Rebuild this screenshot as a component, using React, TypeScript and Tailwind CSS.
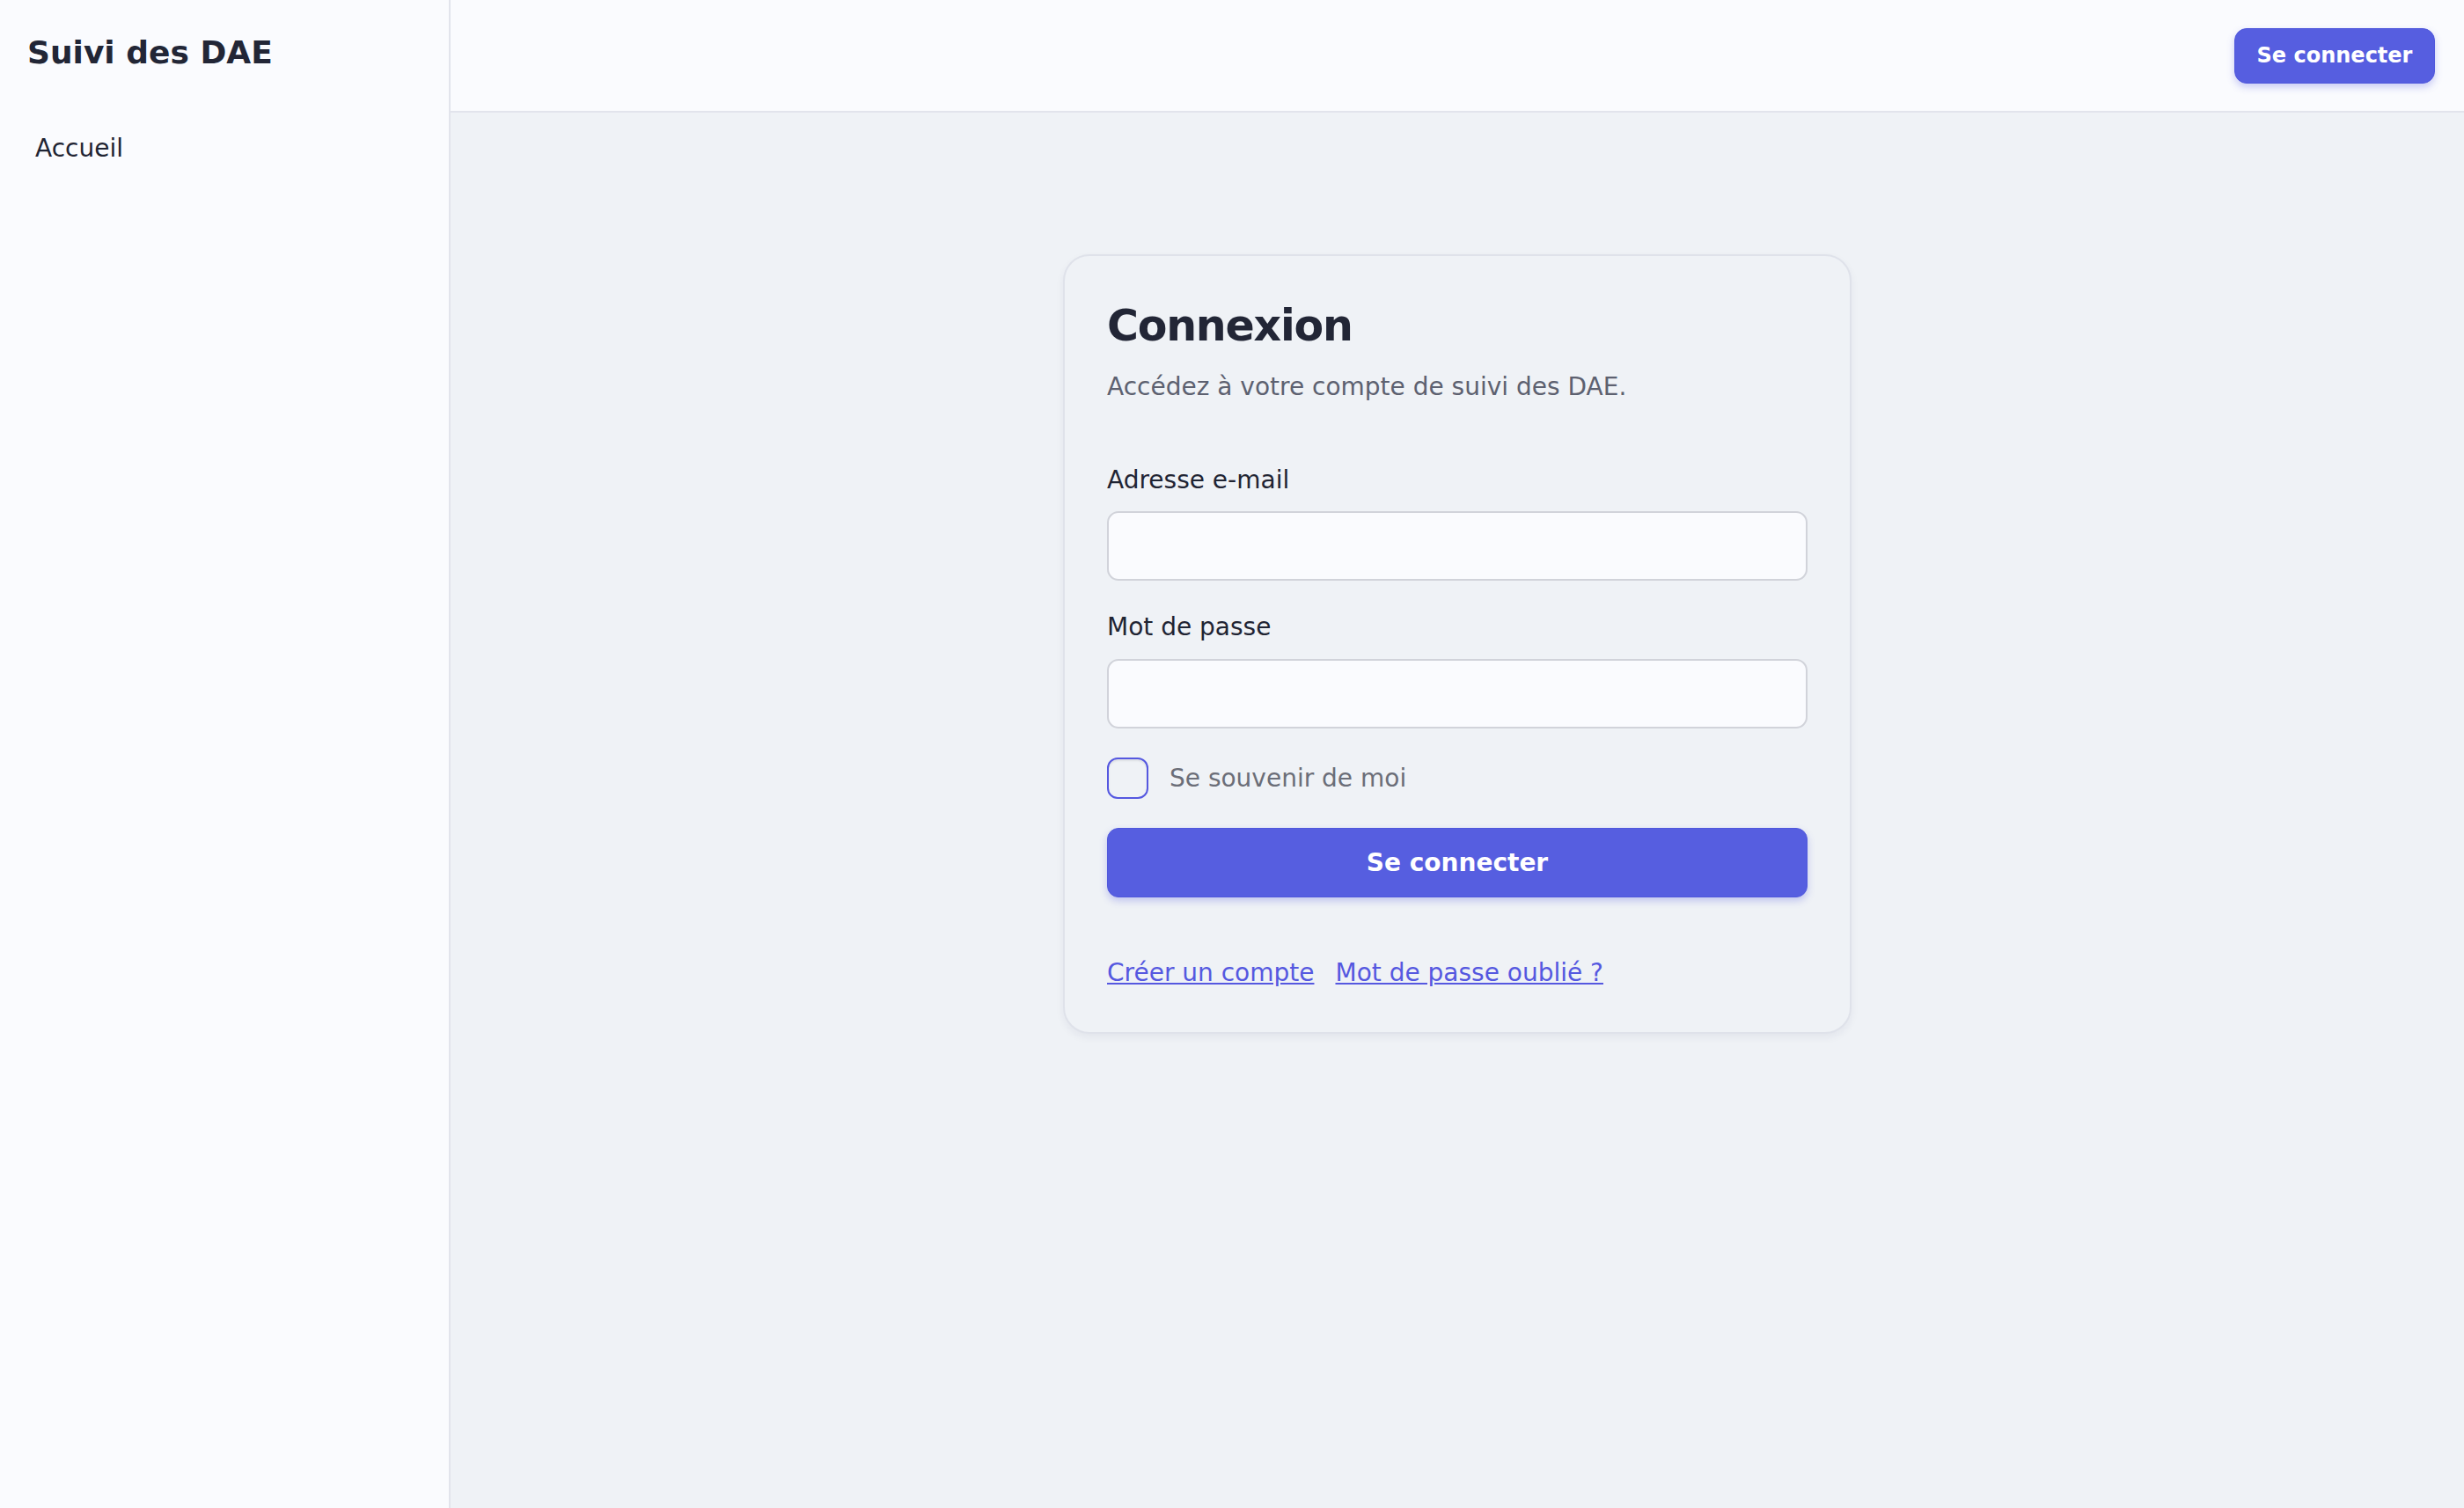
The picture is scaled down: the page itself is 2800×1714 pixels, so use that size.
import React from "react";

export default function App() {
  return (
    <div
      className="flex h-[1714px] w-full overflow-hidden text-[#1f2433]"
      style={{ fontFamily: '"DejaVu Sans", Verdana, sans-serif' }}
    >
      <aside className="w-[512px] shrink-0 bg-[#fafbfe] border-r-2 border-[#e2e4ec]">
        <div className="pl-[31px] pt-[38px] text-[36px] leading-[43px] font-bold text-[#222636]">
          Suivi des DAE
        </div>
        <nav className="mt-[67px]">
          <a className="block pl-[40px] text-[28px] leading-[42px] text-[#1f2433]">Accueil</a>
        </nav>
      </aside>
      <div className="flex-1 flex flex-col bg-[#eff2f6]">
        <header className="h-[128px] shrink-0 bg-[#fafbfe] border-b-2 border-[#e2e4ec] flex items-center justify-end pr-[33px]">
          <button className="h-[63px] w-[228px] rounded-[14px] bg-[#565ee0] border border-[#5058dc] text-white font-bold text-[24px] shadow-[0_4px_8px_rgba(86,94,224,0.3)]">
            Se connecter
          </button>
        </header>
        <main className="flex justify-center pt-[161px]">
          <div className="w-[896px] rounded-[30px] border-2 border-[#dfe2ea] bg-[#eff2f6] px-[48px] pt-[48px] pb-[46px] shadow-[0_4px_10px_rgba(30,40,80,0.06)]">
            <h1 className="text-[49px] leading-[64px] font-bold tracking-[-0.025em] text-[#222636]">
              Connexion
            </h1>
            <p className="mt-[16px] text-[28px] leading-[42px] text-[#5d6170]">
              Accédez à votre compte de suivi des DAE.
            </p>
            <label className="block mt-[64px] text-[28px] leading-[42px] text-[#1f2433]">
              Adresse e-mail
            </label>
            <input
              type="email"
              className="mt-[14px] block w-full h-[79px] rounded-[13px] border-2 border-[#d1d3da] bg-[#fafbfe] outline-none"
            />
            <label className="block mt-[32px] text-[28px] leading-[42px] text-[#1f2433]">
              Mot de passe
            </label>
            <input
              type="password"
              className="mt-[15px] block w-full h-[79px] rounded-[13px] border-2 border-[#d1d3da] bg-[#fafbfe] outline-none"
            />
            <div className="mt-[33px] flex items-center gap-[24px]">
              <span className="w-[47px] h-[47px] rounded-[12px] border-2 border-[#5558e0] shadow-[inset_0_2px_2px_rgba(0,0,0,0.08)]"></span>
              <span className="text-[28px] leading-[42px] text-[#6b6e78]">Se souvenir de moi</span>
            </div>
            <button className="mt-[33px] w-full h-[79px] rounded-[13px] bg-[#565ee0] border border-[#5058dc] text-white font-bold text-[28px] shadow-[0_4px_8px_rgba(86,94,224,0.3)]">
              Se connecter
            </button>
            <div className="mt-[65px] flex gap-[24px] text-[28px] leading-[42px] text-[#5558e0]">
              <a className="underline">Créer un compte</a>
              <a className="underline">Mot de passe oublié ?</a>
            </div>
          </div>
        </main>
      </div>
    </div>
  );
}
